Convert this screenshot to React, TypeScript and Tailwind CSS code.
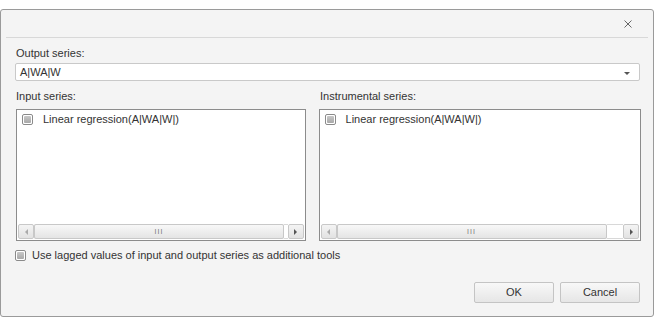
import React from "react";

const font = { fontFamily: '"Liberation Sans", Arial, sans-serif' };

function Check() {
  return (
    <span className="inline-block w-[11px] h-[11px] rounded-[2px] border border-[#8a8a8a] bg-white p-[1px] shrink-0">
      <span className="block w-full h-full rounded-[1px] bg-gradient-to-b from-[#c8c8c8] to-[#a8a8a8]" />
    </span>
  );
}

function ScrollBar({ thumbEnd }: { thumbEnd: string }) {
  return (
    <div className="flex items-stretch h-[15px] mx-[1px] mb-[1px]">
      <div className="w-[16px] flex items-center justify-center border border-[#c8c8c8] bg-gradient-to-b from-[#f4f4f4] to-[#e2e2e2] rounded-[2px]">
        <span className="w-0 h-0 border-y-[3px] border-y-transparent border-r-[3px] border-r-[#aaaaaa]" />
      </div>
      <div className="flex-1 flex items-stretch bg-[#f0f0f0]">
        <div className={`${thumbEnd} flex items-center justify-center border border-[#c8c8c8] rounded-[2px] bg-gradient-to-b from-[#f8f8f8] to-[#e4e4e4] text-[7px] text-[#777] tracking-[1px] leading-none`}>
          III
        </div>
        <div className="flex-1 border-y border-[#d8d8d8] bg-white" />
      </div>
      <div className="w-[16px] flex items-center justify-center border border-[#c8c8c8] bg-gradient-to-b from-[#f4f4f4] to-[#e2e2e2] rounded-[2px]">
        <span className="w-0 h-0 border-y-[3px] border-y-transparent border-l-[3px] border-l-[#555]" />
      </div>
    </div>
  );
}

function ListBox({ className, thumbEnd }: { className: string; thumbEnd: string }) {
  return (
    <div className={`${className} h-[132px] border border-[#8c8c8c] bg-white flex flex-col`}>
      <div className="flex-1 pt-[3px] pl-[5px]">
        <div className="flex items-center gap-[10px] h-[13px]">
          <Check />
          <span className="text-[11px] text-[#333]">Linear regression(A|WA|W|)</span>
        </div>
      </div>
      <ScrollBar thumbEnd={thumbEnd} />
    </div>
  );
}

export default function App() {
  return (
    <div className="w-[656px] h-[326px] bg-white pt-[9px]" style={font}>
      <div className="w-[654px] h-[308px] bg-[#f4f4f4] border border-[#9a9a9a] rounded-[3px] flex flex-col">
        <div className="h-[27px] flex items-center justify-end pr-[21px] pt-[1px]">
          <svg width="8" height="8" viewBox="0 0 8 8">
            <path d="M0.5 0.5 L7.5 7.5 M7.5 0.5 L0.5 7.5" stroke="#666" strokeWidth="1" />
          </svg>
        </div>
        <div className="mx-[5px] h-px bg-[#d8d8d8]" />
        <div className="pl-[14px] pr-[12px] flex flex-col">
          <div className="h-[25px] pt-[9px] text-[11px] text-[#333] leading-[13px] pl-[1px]">Output series:</div>
          <div className="h-[18px] mr-[1px] border border-[#c9c9c9] rounded-[2px] bg-white flex items-center pl-[4px] pr-[9px] text-[11px] text-[#333]">
            <span className="flex-1">A|WA|W</span>
            <span className="w-0 h-0 border-x-[3px] border-x-transparent border-t-[3px] border-t-[#555] mt-[2px]" />
          </div>
          <div className="flex mt-[9px] pl-[1px]">
            <div className="w-[304px] text-[11px] text-[#333] leading-[13px]">Input series:</div>
            <div className="text-[11px] text-[#333] leading-[13px]">Instrumental series:</div>
          </div>
          <div className="flex mt-[6px] pl-[1px]">
            <ListBox className="w-[290px]" thumbEnd="w-[250px]" />
            <div className="w-[13px]" />
            <ListBox className="w-[323px]" thumbEnd="w-[270px]" />
          </div>
          <div className="flex items-center gap-[6px] mt-[8px] h-[12px]">
            <Check />
            <span className="text-[11px] text-[#333]">Use lagged values of input and output series as additional tools</span>
          </div>
          <div className="flex justify-end gap-[6px] mt-[21px] mr-[1px]">
            <button className="w-[80px] h-[21px] border border-[#c4c4c4] rounded-[2px] bg-gradient-to-b from-[#f8f8f8] to-[#e6e6e6] text-[11px] text-[#333]">OK</button>
            <button className="w-[80px] h-[21px] border border-[#c4c4c4] rounded-[2px] bg-gradient-to-b from-[#f8f8f8] to-[#e6e6e6] text-[11px] text-[#333]">Cancel</button>
          </div>
        </div>
      </div>
    </div>
  );
}
